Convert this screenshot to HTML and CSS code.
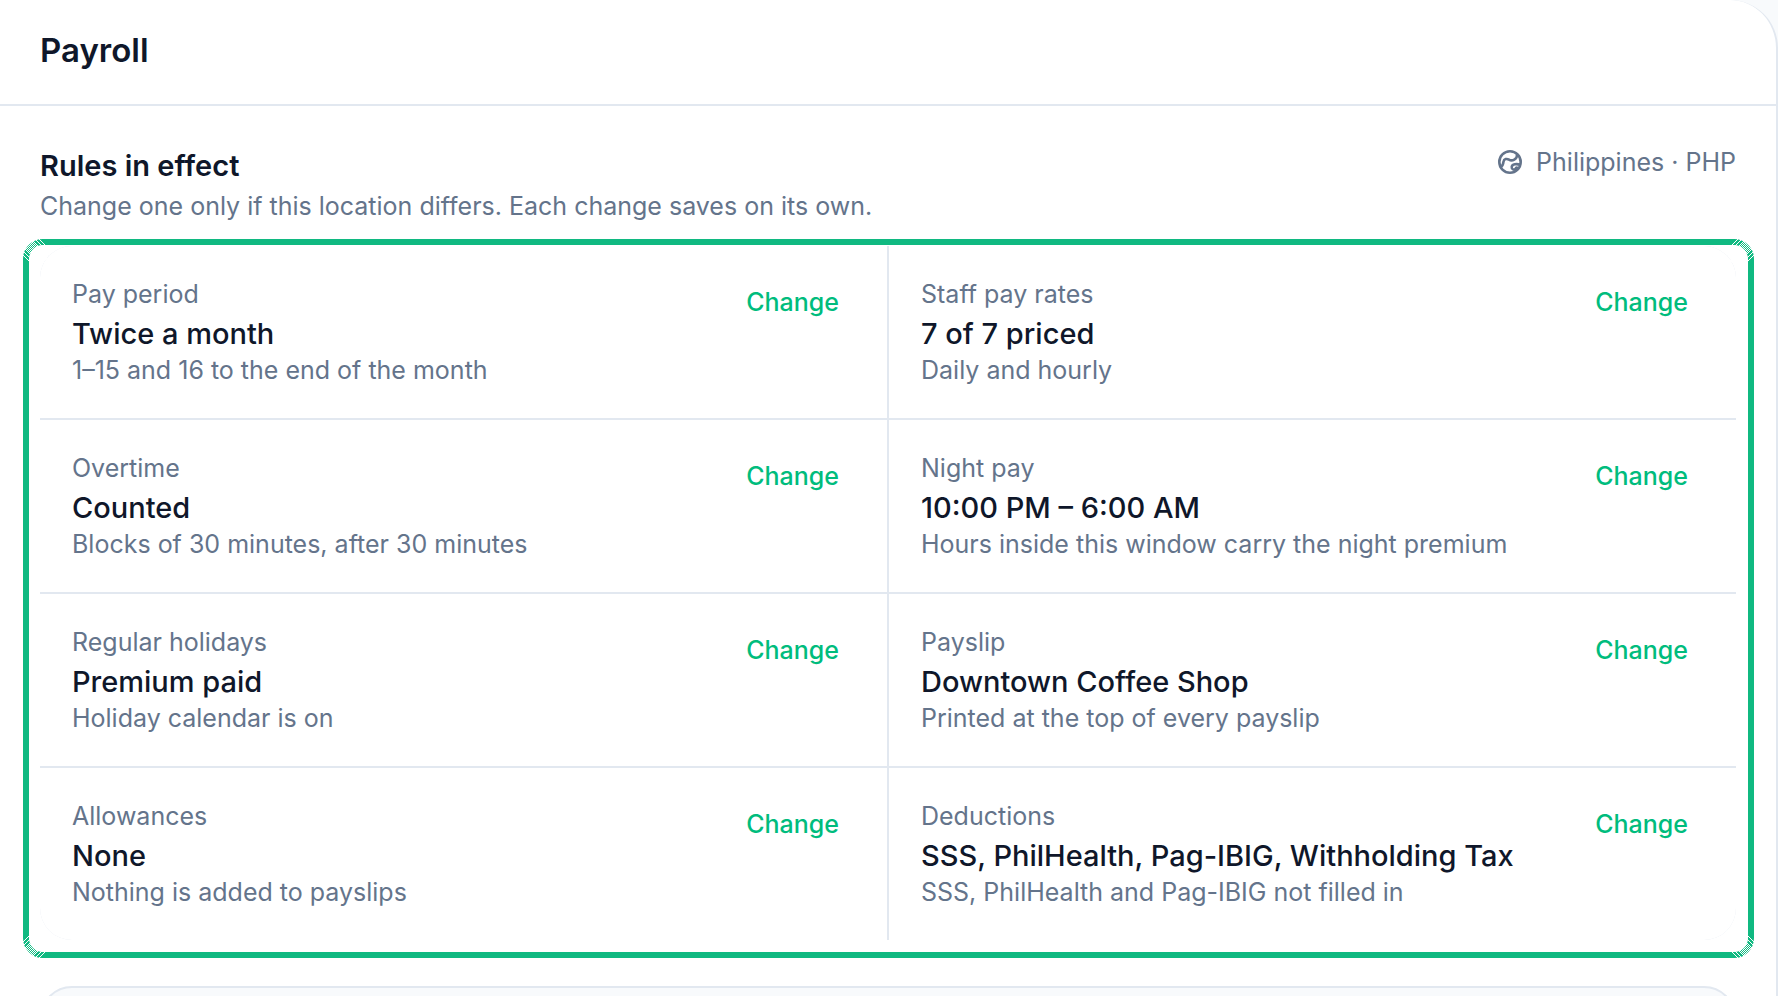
FILE: index.html
```
<!DOCTYPE html>
<html lang="en">
    <head>
        <meta charset="UTF-8">
        <title>Payroll</title>
        <link rel="stylesheet" href="styles.css">
    </head>
    <body>
        <main class="panel">
            <header class="panel-header">
                <h1>Payroll</h1>
            </header>
            <div class="content">
                <div class="section-head">
                    <div>
                        <h2>Rules in effect</h2>
                        <p class="muted">Change one only if this location differs. Each change saves on its own.</p>
                    </div>
                    <div class="region muted">
                        <svg class="icon" viewBox="0 0 24 24" aria-hidden="true">
                            <circle cx="12" cy="12" r="10.7"/>
                            <path d="M3 16.500 C5 16 5.200 14 5.400 12 C6 8.500 9 8.500 11 9.700 C14 11.500 19.500 9.500 19 4.500"/>
                            <path d="M21.800 14.800 C19 13.500 14 14 13.700 17 C13.500 19.500 16 20.300 17.500 18.800 C18.200 17.200 19.200 17.400 20 18.600"/>
                        </svg>
                        <span>Philippines · PHP</span>
                    </div>
                </div>
                <div class="rules-wrap">
                    <div class="rules">
                        <section class="rule">
                            <div>
                                <p class="muted">Pay period</p>
                                <h3>Twice a month</h3>
                                <p class="muted">1–15 and 16 to the end of the month</p>
                            </div>
                            <button type="button" class="change-btn">Change</button>
                        </section>
                        <section class="rule">
                            <div>
                                <p class="muted">Staff pay rates</p>
                                <h3>7 of 7 priced</h3>
                                <p class="muted">Daily and hourly</p>
                            </div>
                            <button type="button" class="change-btn">Change</button>
                        </section>
                        <section class="rule">
                            <div>
                                <p class="muted">Overtime</p>
                                <h3>Counted</h3>
                                <p class="muted">Blocks of 30 minutes, after 30 minutes</p>
                            </div>
                            <button type="button" class="change-btn">Change</button>
                        </section>
                        <section class="rule">
                            <div>
                                <p class="muted">Night pay</p>
                                <h3>10:00 PM – 6:00 AM</h3>
                                <p class="muted">Hours inside this window carry the night premium</p>
                            </div>
                            <button type="button" class="change-btn">Change</button>
                        </section>
                        <section class="rule">
                            <div>
                                <p class="muted">Regular holidays</p>
                                <h3>Premium paid</h3>
                                <p class="muted">Holiday calendar is on</p>
                            </div>
                            <button type="button" class="change-btn">Change</button>
                        </section>
                        <section class="rule">
                            <div>
                                <p class="muted">Payslip</p>
                                <h3>Downtown Coffee Shop</h3>
                                <p class="muted">Printed at the top of every payslip</p>
                            </div>
                            <button type="button" class="change-btn">Change</button>
                        </section>
                        <section class="rule">
                            <div>
                                <p class="muted">Allowances</p>
                                <h3>None</h3>
                                <p class="muted">Nothing is added to payslips</p>
                            </div>
                            <button type="button" class="change-btn">Change</button>
                        </section>
                        <section class="rule">
                            <div>
                                <p class="muted">Deductions</p>
                                <h3>SSS, PhilHealth, Pag-IBIG, Withholding Tax</h3>
                                <p class="muted">SSS, PhilHealth and Pag-IBIG not filled in</p>
                            </div>
                            <button type="button" class="change-btn">Change</button>
                        </section>
                    </div>
                    <!-- green frame with hatched corners -->
                    <div class="highlight">
                        <svg class="corner corner-tl" viewBox="0 0 24 24" aria-hidden="true">
                            <defs>
                                <pattern id="dots" width="2" height="2" patternUnits="userSpaceOnUse">
                                    <path d="M0 0h1v1h-1z M1 1h1v1h-1z" fill="#fff"/>
                                </pattern>
                                <pattern id="lines" width="4" height="4" patternUnits="userSpaceOnUse">
                                    <path d="M0 0h1v1h-1z M1 1h1v1h-1z M2 2h1v1h-1z M3 3h1v1h-1z" fill="#fff"/>
                                </pattern>
                                <g id="hatch" shape-rendering="crispEdges">
                                    <path d="M0 0H7L24 17V24H17L0 7Z" fill="url(#dots)"/>
                                    <path d="M7 0H17L24 7V17Z M0 7V17L7 24H17Z" fill="url(#lines)"/>
                                </g>
                            </defs>
                            <use href="#hatch"/>
                        </svg>
                        <svg class="corner corner-tr" viewBox="0 0 24 24" aria-hidden="true"><use href="#hatch"/></svg>
                        <svg class="corner corner-bl" viewBox="0 0 24 24" aria-hidden="true"><use href="#hatch"/></svg>
                        <svg class="corner corner-br" viewBox="0 0 24 24" aria-hidden="true"><use href="#hatch"/></svg>
                    </div>
                </div>
                <div class="next-card"></div>
            </div>
        </main>
    </body>
</html>
```
FILE: styles.css
```
* {
    box-sizing: border-box;
}
body {
    margin: 0;
    height: 100vh;
    overflow: hidden;
    background: #f8fafc;
    font-family: Inter, "Liberation Sans", sans-serif;
    font-size: 25px;
    line-height: 36px;
    color: #0f172a;
}
h1, h2, h3, p {
    margin: 0;
}
h1 {
    font-size: 33px;
    line-height: 40px;
    font-weight: 600;
}
h2 {
    font-size: 29px;
    line-height: 44px;
    font-weight: 600;
}
h3 {
    margin-top: 4px;
    font-size: 29px;
    line-height: 36px;
    font-weight: 500;
}
.muted {
    color: #64748b;
}
.panel {
    height: 100vh;
    background: #fff;
    border-right: 2px solid #e2e8f0;
    border-top-right-radius: 48px;
    overflow: hidden;
}
.panel-header {
    padding: 30px 40px 34px;
    border-bottom: 2px solid #e2e8f0;
}
.content {
    padding: 38px 40px 0;
}
.section-head {
    display: flex;
    justify-content: space-between;
    align-items: flex-start;
    gap: 32px;
    padding-bottom: 22px;
}
.region {
    display: flex;
    align-items: center;
    gap: 14px;
}
.icon {
    width: 24px;
    height: 24px;
    fill: none;
    stroke: currentColor;
    stroke-width: 2.6;
    stroke-linecap: round;
    stroke-linejoin: round;
}
.rules-wrap {
    position: relative;
}
.rules {
    display: grid;
    grid-template-columns: 1fr 1fr;
    gap: 2px;
    background: #e2e8f0;
    border-radius: 32px;
    overflow: hidden;
}
.rule {
    display: flex;
    justify-content: space-between;
    align-items: flex-start;
    gap: 16px;
    min-height: 172px;
    padding: 30px 32px;
    background: #fff;
}
.change-btn {
    padding: 8px 16px;
    border: 0;
    background: none;
    color: #00bc7d;
    font: inherit;
    font-weight: 500;
    cursor: pointer;
}
.highlight {
    position: absolute;
    inset: -7px -18px -18px -17px;
    border: 6px solid #10b981;
    border-radius: 20px;
    pointer-events: none;
}
.corner {
    position: absolute;
    width: 24px;
    height: 24px;
}
.corner-tl {
    top: -6px;
    left: -6px;
}
.corner-tr {
    top: -6px;
    right: -6px;
    transform: scaleX(-1);
}
.corner-bl {
    bottom: -6px;
    left: -6px;
    transform: scaleY(-1);
}
.corner-br {
    bottom: -6px;
    right: -6px;
    transform: scale(-1);
}
.next-card {
    height: 96px;
    margin-top: 46px;
    background: #f8fafc;
    border: 2px solid #e2e8f0;
    border-radius: 32px;
}
```
